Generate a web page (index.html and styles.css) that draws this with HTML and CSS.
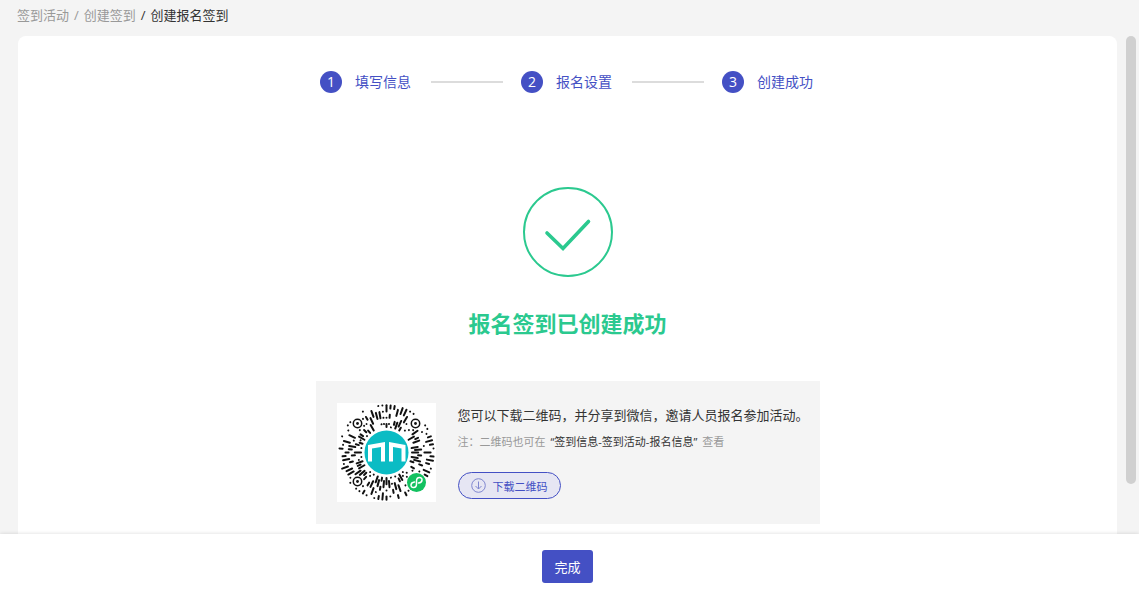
FILE: index.html
```html
<!DOCTYPE html>
<html lang="zh-CN">
<head>
    <meta charset="UTF-8">
    <meta name="viewport" content="width=device-width, initial-scale=1.0">
    <title>创建报名签到</title>
    <link rel="stylesheet" href="styles.css">
</head>
<body>
    <nav class="breadcrumb">
        <a href="#">签到活动</a>
        <span class="sep">/</span>
        <a href="#">创建签到</a>
        <span class="sep dark">/</span>
        <span class="current">创建报名签到</span>
    </nav>

    <main class="content">
        <section class="card">
            <ol class="steps">
                <li class="step"><span class="num">1</span><span class="step-name">填写信息</span></li>
                <li class="step"><span class="num">2</span><span class="step-name">报名设置</span></li>
                <li class="step"><span class="num">3</span><span class="step-name">创建成功</span></li>
            </ol>

            <svg class="success-icon" viewBox="0 0 90 90">
                <circle cx="45" cy="45" r="44"/>
                <path d="M24 46 L40 61.5 L65.5 34.5" stroke-width="3.6"/>
            </svg>
            <h1>报名签到已创建成功</h1>

            <div class="share">
                <svg class="qrcode" viewBox="0 0 99 99">
                    <g id="rays"></g>
                    <g class="finder">
                        <circle cx="20.5" cy="20.5" r="4.2"/><circle class="dot" cx="20.5" cy="20.5" r="1.4"/>
                        <circle cx="78.5" cy="20.5" r="4.2"/><circle class="dot" cx="78.5" cy="20.5" r="1.4"/>
                        <circle cx="20.5" cy="78.5" r="4.2"/><circle class="dot" cx="20.5" cy="78.5" r="1.4"/>
                    </g>
                    <circle cx="49.5" cy="49.5" r="22" fill="#0bbcc4"/>
                    <path d="M31 42 L48 39 V58.5 H44 V44 L35 45.5 V58.5 H31 Z M52 39 L68.5 42 V58.5 H64.5 V45.5 L56 44 V58.5 H52 Z" fill="#fff"/>
                    <circle cx="79.5" cy="79.5" r="9.5" fill="#12c160"/>
                    <path d="M77.5 79 C73 79.5 73 84.5 76.5 84.5 C79 84.5 79.5 82.5 79.5 81 V78 C79.5 76 80.5 74.5 82.5 74.5 C86 74.5 86 79.5 81.5 80" fill="none" stroke="#fff" stroke-width="1.5" stroke-linecap="round"/>
                </svg>
                <div class="share-text">
                    <p class="desc">您可以下载二维码，并分享到微信，邀请人员报名参加活动。</p>
                    <p class="note">注：二维码也可在<b>“签到信息-签到活动-报名信息”</b>查看</p>
                    <button type="button" class="download">
                        <svg viewBox="0 0 15 15"><circle cx="7.5" cy="7.5" r="6.8"/><path d="M7.5 3.5 V11 M4.5 8 L7.5 11 L10.5 8"/></svg>
                        下载二维码
                    </button>
                </div>
            </div>
        </section>
        <div class="scrollbar"></div>
    </main>

    <footer class="actions">
        <button type="button" class="finish">完成</button>
    </footer>

    <script src="script.js"></script>
</body>
</html>
```
FILE: styles.css
```css
* {
    box-sizing: border-box;
}

body {
    margin: 0;
    height: 100vh;
    display: flex;
    flex-direction: column;
    background: #f4f4f4;
    color: #333;
    font-family: "Open Sans", "Noto Sans CJK SC", sans-serif;
    font-size: 13px;
}

button {
    font-family: inherit;
    cursor: pointer;
}

.breadcrumb {
    display: flex;
    flex: none;
    gap: 5px;
    height: 36px;
    padding: 5px 17px;
    line-height: 20px;
}

.breadcrumb a,
.sep {
    color: #999;
    text-decoration: none;
}

.breadcrumb .dark {
    color: #333;
}

.content {
    flex: 1;
    min-height: 0;
    display: flex;
    gap: 9px;
    padding: 0 3px 0 18px;
    overflow: hidden;
}

.card {
    flex: 1;
    display: flex;
    flex-direction: column;
    align-items: center;
    padding-top: 35px;
    background: #fff;
    border-radius: 8px 8px 0 0;
}

.scrollbar {
    width: 10px;
    height: 90%;
    border-radius: 5px;
    background: #d0d0d0;
}

/* steps */
.steps {
    display: flex;
    margin: 0;
    padding: 0;
    list-style: none;
    color: #4450c4;
    font-size: 14px;
    line-height: 22px;
}

.step {
    display: flex;
    align-items: center;
}

.step + .step::before {
    content: '';
    width: 72px;
    height: 2px;
    margin: 0 18px;
    background: #dcdcdc;
}

.num {
    width: 22px;
    height: 22px;
    border-radius: 50%;
    background: #4450c4;
    color: #fff;
    text-align: center;
}

.step-name {
    width: 58px;
    margin-left: 13px;
}

/* result */
.success-icon {
    flex: none;
    width: 90px;
    height: 90px;
    margin-top: 94px;
    fill: none;
    stroke: #2bc98f;
    stroke-width: 2;
    stroke-linecap: round;
}

h1 {
    margin: 30px 0 42px;
    color: #2bc98f;
    font-size: 22px;
    line-height: 32px;
}

.share {
    display: flex;
    gap: 22px;
    width: 504px;
    padding: 22px 21px;
    background: #f4f4f4;
}

.qrcode {
    flex: none;
    width: 99px;
    height: 99px;
    background: #fff;
}

#rays {
    stroke: #111;
    stroke-width: 2;
    stroke-linecap: round;
}

.finder {
    fill: #fff;
    stroke: #111;
    stroke-width: 1.5;
}

.finder .dot {
    fill: #111;
    stroke: none;
}

.desc,
.note {
    margin: 0;
    line-height: 24px;
    white-space: nowrap;
}

.note {
    margin-top: 3px;
    color: #999;
    font-size: 11px;
}

.note b {
    margin: 0 5px;
    color: #333;
    font-weight: normal;
}

.download {
    display: flex;
    align-items: center;
    gap: 7px;
    height: 27px;
    margin-top: 18px;
    padding: 0 12px;
    border: 1px solid #4450c4;
    border-radius: 14px;
    background: #e6e6f3;
    color: #4450c4;
    font-size: 11px;
}

.download svg {
    width: 15px;
    height: 15px;
    fill: none;
    stroke: #7f86cf;
}

/* bottom bar */
.actions {
    flex: none;
    display: flex;
    justify-content: center;
    height: 65px;
    padding: 16px 4px 16px 0;
    background: #fff;
    box-shadow: 0 0 4px rgba(0, 0, 0, 0.15);
    z-index: 1;
}

.finish {
    width: 51px;
    padding: 0;
    border: 0;
    border-radius: 3px;
    background: #4450c4;
    color: #fff;
    font-size: 13px;
}
```
FILE: script.js
```js
// mini program code: dashes along rays around the logo
const rays = document.getElementById('rays');
const COUNT = 72;
const CENTER = 49.5;
const STEP = 3.1;
const MAX_DASH = 7;
// areas kept free for the finder rings and the badge: x, y, radius
const holes = [[20.5, 20.5, 6.5], [78.5, 20.5, 6.5], [20.5, 78.5, 6.5], [79.5, 79.5, 11]];
let seed = 2024;

function nextBit() {
    seed = (seed * 16807) % 2147483647;
    return seed / 2147483647 < 0.66;
}

function point(r, angle) {
    return [CENTER + r * Math.cos(angle), CENTER + r * Math.sin(angle)];
}

function isFree(r, angle) {
    const [x, y] = point(r, angle);
    return holes.every(([hx, hy, hr]) => Math.hypot(x - hx, y - hy) > hr);
}

function addDash(from, to, angle) {
    const [x1, y1] = point(from, angle);
    const [x2, y2] = point(to + 0.01, angle);
    const path = document.createElementNS('http://www.w3.org/2000/svg', 'path');
    path.setAttribute('d', `M${x1} ${y1} L${x2} ${y2}`);
    rays.appendChild(path);
}

for (let i = 0; i < COUNT; i++) {
    const angle = i * 2 * Math.PI / COUNT;
    let start = null;
    let last = null;
    for (let r = 25.5; r < 49; r += STEP) {
        // the inner ring only has room for every other ray
        const fits = r > 27 || i % 2 === 0;
        const tooLong = start !== null && r - start > MAX_DASH;
        if (nextBit() && fits && !tooLong && isFree(r, angle)) {
            if (start === null) start = r;
            last = r;
        } else if (start !== null) {
            addDash(start, last, angle);
            start = null;
        }
    }
    if (start !== null) addDash(start, last, angle);
}
```
